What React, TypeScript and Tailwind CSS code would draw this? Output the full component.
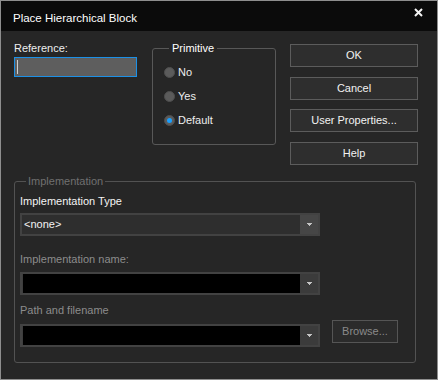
import React from "react";

const buttons = [
  { label: "OK", mt: "mt-0" },
  { label: "Cancel", mt: "mt-[10px]" },
  { label: "User Properties...", mt: "mt-[9px]" },
  { label: "Help", mt: "mt-[10px]" },
];

const radios = [
  { label: "No", checked: false },
  { label: "Yes", checked: false },
  { label: "Default", checked: true },
];

function DropArrow() {
  return (
    <svg width="5" height="3" viewBox="0 0 5 3" shapeRendering="crispEdges">
      <rect x="0" y="0" width="5" height="1" fill="#c4c4c4" />
      <rect x="1" y="1" width="3" height="1" fill="#c4c4c4" />
      <rect x="2" y="2" width="1" height="1" fill="#c4c4c4" />
    </svg>
  );
}

function Combo({ value, active }: { value?: string; active?: boolean }) {
  return (
    <div className="flex h-[23px] w-[300px] border-2 border-[#424242] bg-[#3d3d3d]">
      <div
        className={
          active
            ? "flex flex-1 items-center bg-[#2e2e2e] pl-[2px] text-[#f2f2f2]"
            : "ml-[1px] flex-1 bg-black"
        }
      >
        {value}
      </div>
      <div
        className={
          active
            ? "flex w-[18px] items-center justify-center bg-[#464646]"
            : "flex w-[18px] items-center justify-center bg-[#3b3b3b]"
        }
      >
        <DropArrow />
      </div>
    </div>
  );
}

export default function App() {
  return (
    <div className="flex h-[380px] w-[438px] flex-col border border-[#8e8e8e] bg-[#262626] font-['Liberation_Sans',Arial,sans-serif] text-[11px] leading-[15px] text-[#eeeeee]">
      {/* title bar */}
      <div className="flex h-[30px] items-start justify-between bg-[#0b0b0b] pl-[12px] pr-[14px]">
        <span className="mt-[10px] text-[11.5px] text-white">Place Hierarchical Block</span>
        <svg className="mt-[7px]" width="9" height="9" viewBox="0 0 9 9">
          <path d="M1 1 L8 8 M8 1 L1 8" stroke="#f4f4f4" strokeWidth="2" />
        </svg>
      </div>

      <div className="flex flex-col pl-[13px]">
        <div className="flex items-start">
          {/* reference */}
          <div className="mt-[10px] flex w-[123px] flex-col">
            <span>Reference:</span>
            <div className="mt-[1px] flex h-[20px] items-center border border-[#1c90e6] bg-[#5e5e5e] pl-[2px]">
              <div className="h-[14px] w-px bg-[#cfcfcf]" />
            </div>
          </div>

          {/* primitive group */}
          <fieldset className="ml-[15px] mt-[10px] w-[124px] rounded-[3px] border border-[#585858] pb-[16px] pl-[11px] pt-[8px]">
            <legend className="ml-[5px] px-[3px] text-white">Primitive</legend>
            <div className="flex flex-col gap-[8px]">
              {radios.map((r) => (
                <div key={r.label} className="flex h-[16px] items-center">
                  <div className="flex h-[11px] w-[11px] items-center justify-center rounded-full border border-[#4e4e4e] bg-[#5b5b5b]">
                    {r.checked && <div className="h-[5px] w-[5px] rounded-full bg-[#1aa0ff]" />}
                  </div>
                  <span className="ml-[3px]">{r.label}</span>
                </div>
              ))}
            </div>
          </fieldset>

          {/* buttons */}
          <div className="ml-[14px] mt-[13px] flex w-[128px] flex-col">
            {buttons.map((b) => (
              <div
                key={b.label}
                className={`${b.mt} flex h-[23px] items-center justify-center border border-[#5c5c5c] bg-[#2e2e2e] text-[#f2f2f2]`}
              >
                {b.label}
              </div>
            ))}
          </div>
        </div>

        {/* implementation group */}
        <fieldset className="mt-[9px] w-[402px] rounded-[3px] border border-[#525252] pb-[15px] pl-[5px] pt-[5px]">
          <legend className="ml-[6px] px-[2px] text-[#707070]">Implementation</legend>
          <div className="text-[#f4f4f4]">Implementation Type</div>
          <div className="mt-[4px]">
            <Combo value="<none>" active />
          </div>
          <div className="mt-[16px] text-[#8c8c8c]">Implementation name:</div>
          <div className="mt-[5px]">
            <Combo />
          </div>
          <div className="mt-[8px] text-[#8c8c8c]">Path and filename</div>
          <div className="mt-[2px] flex items-start">
            <div className="mt-[4px]">
              <Combo />
            </div>
            <div className="ml-[12px] flex h-[23px] w-[66px] items-center justify-center border border-[#555555] bg-[#2b2b2b] text-[#8a8a8a]">
              Browse...
            </div>
          </div>
        </fieldset>
      </div>
    </div>
  );
}
